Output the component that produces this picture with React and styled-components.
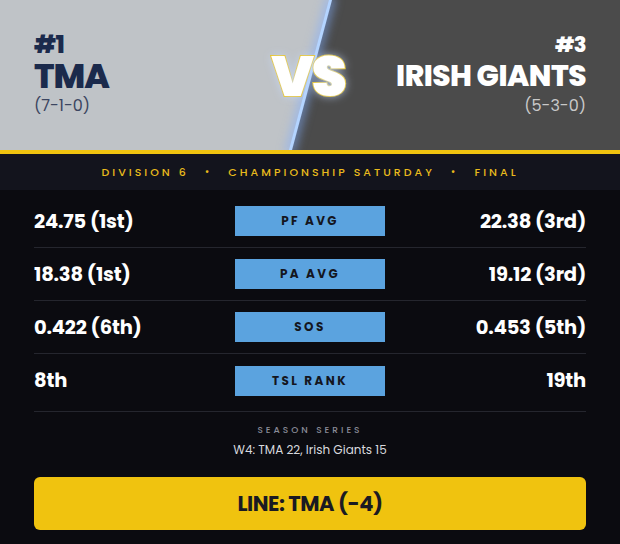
import React from 'react';
import styled, { createGlobalStyle } from 'styled-components';

const GlobalStyle = createGlobalStyle`
  html, body {
    margin: 0;
    padding: 0;
    background: #0b0b10;
  }
  body {
    font-family: "Poppins", "Inter", "Noto Sans", sans-serif;
  }
`;

const stats = [
  { label: 'PF AVG', home: '24.75 (1st)', away: '22.38 (3rd)' },
  { label: 'PA AVG', home: '18.38 (1st)', away: '19.12 (3rd)' },
  { label: 'SOS', home: '0.422 (6th)', away: '0.453 (5th)' },
  { label: 'TSL RANK', home: '8th', away: '19th' },
];

export default function App() {
  return (
    <>
      <GlobalStyle />
      <Card>
        <Header>
          <Team>
            <Seed>#1</Seed>
            <TeamName>TMA</TeamName>
            <Record>(7-1-0)</Record>
          </Team>
          <Versus>VS</Versus>
          <Team $away>
            <Seed $small>#3</Seed>
            <TeamName $small>IRISH GIANTS</TeamName>
            <Record>(5-3-0)</Record>
          </Team>
        </Header>
        <InfoBand>
          <span>DIVISION 6</span>
          <Dot>•</Dot>
          <span>CHAMPIONSHIP SATURDAY</span>
          <Dot>•</Dot>
          <span>FINAL</span>
        </InfoBand>
        <Stats>
          {stats.map((s) => (
            <StatRow key={s.label}>
              <StatValue>{s.home}</StatValue>
              <StatLabel>{s.label}</StatLabel>
              <StatValue $right>{s.away}</StatValue>
            </StatRow>
          ))}
        </Stats>
        <Series>
          <SeriesTitle>SEASON SERIES</SeriesTitle>
          <SeriesText>W4: TMA 22, Irish Giants 15</SeriesText>
        </Series>
        <LineBox>LINE: TMA (-4)</LineBox>
      </Card>
    </>
  );
}

const Card = styled.div`
  width: 620px;
  min-height: 544px;
  background: #0b0b10;
  display: flex;
  flex-direction: column;
`;

const Header = styled.div`
  position: relative;
  height: 150px;
  overflow: hidden;
  background: #bfc3c7;
  border-bottom: 4px solid #f0c30f;
  display: grid;
  grid-template-columns: 1fr auto 1fr;
  padding: 0 34px;

  &::before {
    content: '';
    position: absolute;
    inset: 0;
    background: #4b4b4b;
    clip-path: polygon(330px 0, 100% 0, 100% 100%, 290px 100%);
  }

  &::after {
    content: '';
    position: absolute;
    left: 308.5px;
    top: -3px;
    width: 3px;
    height: 156px;
    background: #b4d4ff;
    transform: rotate(14.93deg);
    box-shadow: 0 0 10px 3px rgba(130, 175, 255, 0.6);
  }
`;

const Team = styled.div`
  position: relative;
  z-index: 1;
  display: flex;
  flex-direction: column;
  justify-content: flex-end;
  padding-bottom: 33px;
  align-items: ${(p) => (p.$away ? 'flex-end' : 'flex-start')};
  text-align: ${(p) => (p.$away ? 'right' : 'left')};
  color: ${(p) => (p.$away ? '#ffffff' : '#1b2a4c')};

  & > span:last-child {
    color: ${(p) => (p.$away ? '#c9c9c9' : '#3b4560')};
  }
`;

const Seed = styled.div`
  font-size: ${(p) => (p.$small ? '21px' : '24px')};
  font-weight: 800;
  line-height: 24px;
  letter-spacing: -0.5px;
`;

const TeamName = styled.div`
  font-size: ${(p) => (p.$small ? '29.5px' : '34px')};
  font-weight: 800;
  line-height: 38px;
  letter-spacing: ${(p) => (p.$small ? '-0.5px' : '-1px')};
  white-space: nowrap;
`;

const Record = styled.span`
  font-size: 16px;
  font-weight: 400;
  line-height: 22px;
`;

const Versus = styled.div`
  position: relative;
  z-index: 2;
  align-self: center;
  font-size: 56px;
  font-weight: 900;
  letter-spacing: -2px;
  color: #ffffff;
  -webkit-text-stroke: 2px #f0c30f;
  paint-order: stroke fill;
  text-shadow: 0 0 10px rgba(200, 220, 255, 0.8);
  margin: 2px 4px 0 0;
`;

const InfoBand = styled.div`
  height: 36px;
  background: #13141d;
  display: flex;
  align-items: center;
  justify-content: center;
  gap: 16px;
  color: #e9bb1c;
  font-size: 11px;
  font-weight: 500;
  letter-spacing: 3px;
`;

const Dot = styled.span`
  font-size: 10px;
`;

const Stats = styled.div`
  margin: 5px 34px 0;
  border-bottom: 1px solid #25262e;
  padding-bottom: 4px;
`;

const StatRow = styled.div`
  height: 53px;
  display: grid;
  grid-template-columns: 1fr 150px 1fr;
  align-items: center;
  column-gap: 50px;
  border-bottom: 1px solid #25262e;
  box-sizing: border-box;

  &:last-child {
    border-bottom: none;
  }
`;

const StatValue = styled.div`
  color: #ffffff;
  font-size: 19.5px;
  font-weight: 700;
  letter-spacing: -0.2px;
  text-align: ${(p) => (p.$right ? 'right' : 'left')};
`;

const StatLabel = styled.div`
  height: 30px;
  background: #5ba3df;
  color: #14161e;
  display: flex;
  align-items: center;
  justify-content: center;
  font-size: 12px;
  font-weight: 700;
  letter-spacing: 2.4px;
`;

const Series = styled.div`
  display: flex;
  flex-direction: column;
  align-items: center;
  padding-top: 12px;
  gap: 4px;
`;

const SeriesTitle = styled.div`
  color: #8a8c98;
  font-size: 9px;
  font-weight: 500;
  letter-spacing: 3px;
`;

const SeriesText = styled.div`
  color: #d8d9de;
  font-size: 12px;
  font-weight: 400;
`;

const LineBox = styled.div`
  margin: 18px 34px 0;
  height: 53px;
  border-radius: 6px;
  background: #f0c30f;
  color: #1a1a22;
  display: flex;
  align-items: center;
  justify-content: center;
  font-size: 21px;
  font-weight: 700;
  letter-spacing: -0.5px;
`;
